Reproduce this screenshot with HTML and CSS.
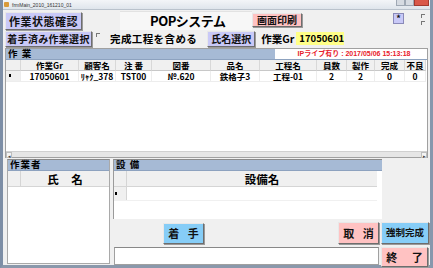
FILE: index.html
```html
<!DOCTYPE html>
<html lang="ja">
<head>
  <meta charset="UTF-8" />
  <title>frmMain_2010_161210_01</title>
  <link rel="stylesheet" href="styles.css">
</head>
<body>
  <div class="window">

    <!-- Title bar -->
    <div class="titlebar">
      <span class="app-icon"></span>
      <span class="caption">frmMain_2010_161210_01</span>
      <div class="win-controls">
        <span class="ctl"></span>
        <span class="ctl"></span>
        <span class="ctl close"></span>
      </div>
    </div>

    <div class="client">

      <!-- Top toolbar -->
      <div class="toolbar-row first">
        <button class="btn purple btn-status">作業状態確認</button>
        <div class="title-box">POPシステム</div>
        <button class="btn pink btn-print">画面印刷</button>
        <button class="btn purple btn-star">*</button>
        <div class="mini-checks">
          <span class="mini-check"></span>
          <span class="mini-check"></span>
        </div>
      </div>
      <div class="toolbar-row second">
        <button class="btn purple btn-started">着手済み作業選択</button>
        <span class="checkbox"></span>
        <span class="check-label">完成工程を含める</span>
        <button class="btn purple btn-name">氏名選択</button>
        <span class="gr-label">作業Gr</span>
        <span class="gr-value">17050601</span>
      </div>

      <!-- Work grid -->
      <section class="work-grid">
        <div class="panel-head">
          <span class="panel-title">作 業</span>
          <span class="status">IPライブ有り : 2017/05/06 15:13:18</span>
        </div>
        <div class="grid">
          <div class="hcell sel"></div>
          <div class="hcell">作業Gr</div>
          <div class="hcell">顧客名</div>
          <div class="hcell">注 番</div>
          <div class="hcell">図番</div>
          <div class="hcell">品名</div>
          <div class="hcell">工程名</div>
          <div class="hcell">員数</div>
          <div class="hcell">製作</div>
          <div class="hcell">完成</div>
          <div class="hcell">不良</div>

          <div class="cell sel"><span class="marker"></span></div>
          <div class="cell">17050601</div>
          <div class="cell">ﾘｬｸ_378</div>
          <div class="cell">TST00</div>
          <div class="cell">№.620</div>
          <div class="cell">鉄格子3</div>
          <div class="cell">工程-01</div>
          <div class="cell">2</div>
          <div class="cell">2</div>
          <div class="cell">0</div>
          <div class="cell">0</div>
        </div>
        <div class="grid-fill"></div>
        <div class="hscroll">
          <span class="sbtn">&#9666;</span>
          <span class="track"></span>
          <span class="sbtn">&#9656;</span>
        </div>
      </section>

      <!-- Bottom area -->
      <div class="bottom">
        <section class="worker-panel">
          <div class="panel-head"><span class="panel-title">作業者</span></div>
          <div class="sub-head">
            <span class="sel"></span>
            <span class="sub-title">氏 名</span>
          </div>
        </section>

        <div class="right-col">
          <section class="equip-panel">
            <div class="panel-head"><span class="panel-title">設 備</span></div>
            <div class="sub-head">
              <span class="sel"></span>
              <span class="sub-title">設備名</span>
            </div>
            <div class="equip-row">
              <span class="sel"><span class="marker"></span></span>
              <span class="equip-cell"></span>
            </div>
          </section>

          <div class="action-row">
            <button class="btn blue btn-start">着 手</button>
            <button class="btn pink btn-cancel">取 消</button>
          </div>
          <button class="btn blue btn-force">強制完成</button>

          <div class="memo"></div>
          <button class="btn pink btn-exit">終 了</button>
        </div>
      </div>

    </div>
  </div>
</body>
</html>
```

FILE: styles.css
```css
/* Base */
*, *::before, *::after {
  box-sizing: border-box;
}
body {
  margin: 0;
  width: 433px;
  height: 268px;
  overflow: hidden;
  background: #ffffff;
  font-family: "Noto Sans CJK JP", "Liberation Sans", sans-serif;
  color: #000;
}

/* Window frame */
.window {
  width: 433px;
  height: 268px;
  display: flex;
  flex-direction: column;
  background: #c9d3df;
  border-left: 3px solid #7d8ea6;
  border-right: 3px solid #8797ad;
  border-bottom: 3px solid #8a98ab;
}
.titlebar {
  height: 9px;
  display: flex;
  align-items: center;
  gap: 3px;
  padding-left: 1px;
  background: linear-gradient(#f3f5f8, #dfe5ec);
}
.app-icon {
  width: 5px;
  height: 5px;
  background: #d89a3a;
  border-radius: 1px;
}
.caption {
  font-family: "Liberation Sans", sans-serif;
  font-size: 5px;
  color: #333;
}
.win-controls {
  margin-left: auto;
  margin-right: 1px;
  display: flex;
  align-self: flex-start;
  height: 6px;
}
.ctl {
  width: 9px;
  height: 6px;
  background: #d6dbe2;
  border: 1px solid #9fa8b4;
  border-top: none;
}
.ctl.close {
  width: 15px;
  background: #d9584a;
  border-color: #a23a30;
}

/* Client area */
.client {
  flex: 1;
  min-height: 0;
  background: #f0f0f0;
  border-top: 1px solid #b9c2cc;
  display: flex;
  flex-direction: column;
  padding: 1px 0 0 2px;
}

/* Buttons */
.btn {
  font-family: "Noto Sans CJK JP", sans-serif;
  font-weight: 700;
  font-size: 10.5px;
  line-height: 1;
  padding: 0;
  margin: 0;
  color: #111;
  border: 1px solid #6d6d6d;
  border-top-color: #e8e8e8;
  border-left-color: #e8e8e8;
  box-shadow: 1px 1px 0 #9a9a9a;
  display: flex;
  align-items: center;
  justify-content: center;
  white-space: nowrap;
}
.btn.purple { background: #c9c9f7; }
.btn.pink { background: #ffc2c2; }
.btn.blue { background: #86cdf7; }

/* Toolbar rows */
.toolbar-row {
  display: flex;
  align-items: flex-start;
}
.toolbar-row.first {
  height: 19px;
}
.btn-status {
  width: 77px;
  height: 18px;
  margin-top: 1px;
  font-size: 11px;
  letter-spacing: 0.5px;
}
.title-box {
  width: 132px;
  height: 19px;
  margin-left: 38px;
  background: #f7f7f7;
  border-top: 1px solid #e2e2e2;
  font-weight: 700;
  font-size: 13px;
  line-height: 18px;
  padding-left: 30px;
  letter-spacing: -0.5px;
}
.btn-print {
  width: 50px;
  height: 14px;
  margin-top: 2px;
  font-size: 10px;
}
.btn-star {
  width: 11px;
  height: 11px;
  margin-left: 91px;
  margin-top: 2px;
  font-size: 9px;
  box-shadow: none;
  border-color: #8a8ab8;
}
.mini-checks {
  display: flex;
  flex-direction: column;
  gap: 3px;
  margin-left: 17px;
  margin-top: 3px;
}
.mini-check {
  width: 4px;
  height: 4px;
  border-top: 1px solid #777;
  border-left: 1px solid #777;
}

.toolbar-row.second {
  height: 17px;
  align-items: center;
}
.btn-started {
  width: 87px;
  height: 16px;
  font-size: 10px;
  letter-spacing: 0.3px;
}
.checkbox {
  width: 4px;
  height: 4px;
  margin-left: 4px;
  align-self: flex-start;
  margin-top: 3px;
  border-top: 1px solid #777;
  border-left: 1px solid #777;
}
.check-label {
  margin-left: 10px;
  font-weight: 700;
  font-size: 10.5px;
  letter-spacing: 0.4px;
}
.btn-name {
  width: 48px;
  height: 16px;
  margin-left: 10px;
  font-size: 10px;
}
.gr-label {
  margin-left: 6px;
  font-weight: 700;
  font-size: 10.5px;
}
.gr-value {
  width: 48px;
  height: 13px;
  margin-left: 2px;
  background: #ffff88;
  font-weight: 700;
  font-size: 9.5px;
  line-height: 13px;
  padding-left: 3px;
}

/* Panels */
.panel-head {
  height: 11px;
  flex-shrink: 0;
  background: #a6bad5;
  display: flex;
  align-items: center;
  border-bottom: 1px solid #8da2bf;
}
.panel-title {
  font-weight: 700;
  font-size: 9.5px;
  line-height: 1;
  padding-left: 2px;
  letter-spacing: 1px;
}

/* Work grid */
.work-grid {
  width: 423px;
  height: 110px;
  flex-shrink: 0;
  margin-top: 1px;
  display: flex;
  flex-direction: column;
  background: #fff;
  border: 1px solid #a0a0a0;
}
.status {
  margin-left: auto;
  width: 152px;
  height: 10px;
  background: #fff;
  color: #e8202a;
  font-family: "Liberation Sans", "Noto Sans CJK JP", sans-serif;
  font-weight: 700;
  font-size: 7px;
  line-height: 10px;
  text-align: center;
  padding-left: 6px;
}
.grid {
  display: grid;
  grid-template-columns: 15px 58px 37px 36px 59px 49px 57px 30px 28px 30px 21px;
  grid-template-rows: 11px 11px;
  font-weight: 700;
  font-size: 8.5px;
}
.hcell,
.cell {
  overflow: hidden;
  text-align: center;
  line-height: 10px;
  white-space: nowrap;
}
.hcell {
  background: #f0f0f0;
  border-right: 1px solid #d8d8d8;
  border-bottom: 1px solid #c8c8c8;
}
.cell {
  border-right: 1px solid #ededed;
  border-bottom: 1px solid #ededed;
}
.cell.sel {
  background: #f0f0f0;
}
.marker {
  display: block;
  width: 2px;
  height: 3px;
  margin: 3px 0 0 3px;
  background: #000;
}
.grid-fill {
  flex: 1;
}
.hscroll {
  height: 6px;
  display: flex;
  align-items: center;
  background: #e6e6e6;
  border-top: 1px solid #d0d0d0;
}
.sbtn {
  width: 6px;
  height: 6px;
  font-size: 5px;
  line-height: 5px;
  text-align: center;
  color: #444;
  background: #f4f4f4;
  border: 1px solid #bdbdbd;
}
.track {
  flex: 1;
}

/* Bottom section */
.bottom {
  flex: 1;
  min-height: 0;
  display: flex;
  gap: 3px;
  margin-top: 1px;
  padding-left: 2px;
  padding-bottom: 1px;
}
.worker-panel {
  width: 103px;
  background: #fff;
  border: 1px solid #a9a9a9;
  border-top-color: #8a8a8a;
}
.sub-head {
  height: 16px;
  display: flex;
  background: #f0f0f0;
  border-bottom: 1px solid #d5d5d5;
}
.sub-head .sel {
  width: 13px;
  border-right: 1px solid #d5d5d5;
}
.sub-title {
  flex: 1;
  text-align: center;
  font-weight: 700;
  font-size: 11.5px;
  line-height: 16px;
}
.worker-panel .sub-title {
  letter-spacing: 5px;
  padding-left: 5px;
}

.right-col {
  display: grid;
  grid-template-columns: 266px 48px;
  grid-template-rows: 60px 22px 20px;
  column-gap: 2px;
  row-gap: 3px;
  align-items: start;
}
.equip-panel {
  grid-column: 1;
  grid-row: 1;
  height: 60px;
  width: 269px;
  background: #fff;
  border-left: 1px solid #9a9a9a;
  border-top: 1px solid #8a8a8a;
}
.equip-panel .sub-head {
  margin-right: 5px;
}
.equip-panel .sub-title {
  padding-left: 20px;
}
.equip-row {
  display: flex;
  height: 14px;
  margin-right: 5px;
  border-bottom: 1px solid #f0f0f0;
}
.equip-row .sel {
  width: 13px;
  background: #f0f0f0;
  border-right: 1px solid #d5d5d5;
}
.equip-row .marker {
  margin: 5px 0 0 1px;
}
.equip-cell {
  flex: 1;
}

.action-row {
  grid-column: 1;
  grid-row: 2;
  display: flex;
  justify-content: space-between;
  align-items: flex-start;
  height: 22px;
}
.btn-start {
  width: 41px;
  height: 21px;
  margin-left: 50px;
  margin-top: 1px;
  font-size: 11px;
  letter-spacing: 3px;
  padding-left: 3px;
}
.btn-cancel {
  width: 41px;
  height: 22px;
  font-size: 11px;
  letter-spacing: 3px;
  padding-left: 3px;
}
.btn-force {
  grid-column: 2;
  grid-row: 2;
  width: 48px;
  height: 22px;
  font-size: 9.5px;
}
.memo {
  grid-column: 1;
  grid-row: 3;
  height: 18px;
  margin-left: 1px;
  background: #fff;
  border: 1px solid #a0a0a0;
  border-top-color: #888;
}
.btn-exit {
  grid-column: 2;
  grid-row: 3;
  width: 47px;
  height: 20px;
  font-size: 11px;
  letter-spacing: 6px;
  padding-left: 6px;
}
```
